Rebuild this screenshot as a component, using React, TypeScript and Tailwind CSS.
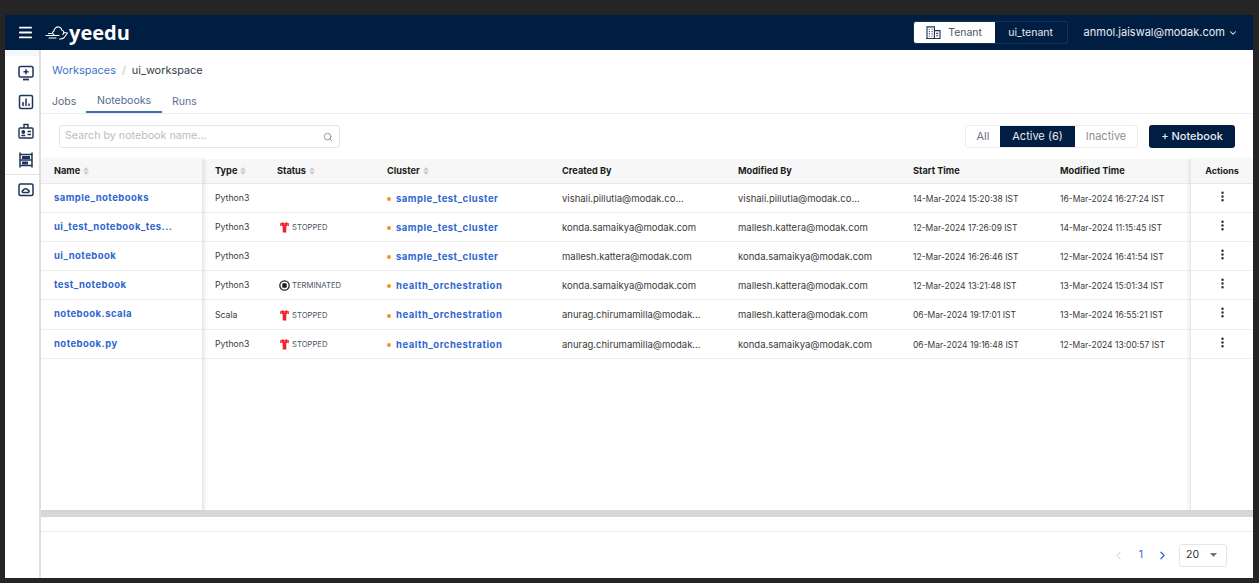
import React from 'react';
import { ChevronDown, ChevronLeft, ChevronRight, EllipsisVertical, Menu, Search } from 'lucide-react';

type Row = {
  name: string;
  type: string;
  status?: 'STOPPED' | 'TERMINATED';
  cluster: string;
  createdBy: string;
  modifiedBy: string;
  start: string;
  modified: string;
  h: string;
};

const rows: Row[] = [
  { name: 'sample_notebooks', type: 'Python3', cluster: 'sample_test_cluster', createdBy: 'vishali.pillutla@modak.co...', modifiedBy: 'vishali.pillutla@modak.co...', start: '14-Mar-2024 15:20:38 IST', modified: '16-Mar-2024 16:27:24 IST', h: 'h-[29px]' },
  { name: 'ui_test_notebook_tes...', type: 'Python3', status: 'STOPPED', cluster: 'sample_test_cluster', createdBy: 'konda.samaikya@modak.com', modifiedBy: 'mallesh.kattera@modak.com', start: '12-Mar-2024 17:26:09 IST', modified: '14-Mar-2024 11:15:45 IST', h: 'h-[29px]' },
  { name: 'ui_notebook', type: 'Python3', cluster: 'sample_test_cluster', createdBy: 'mallesh.kattera@modak.com', modifiedBy: 'konda.samaikya@modak.com', start: '12-Mar-2024 16:26:46 IST', modified: '12-Mar-2024 16:41:54 IST', h: 'h-[29px]' },
  { name: 'test_notebook', type: 'Python3', status: 'TERMINATED', cluster: 'health_orchestration', createdBy: 'konda.samaikya@modak.com', modifiedBy: 'mallesh.kattera@modak.com', start: '12-Mar-2024 13:21:48 IST', modified: '13-Mar-2024 15:01:34 IST', h: 'h-[29px]' },
  { name: 'notebook.scala', type: 'Scala', status: 'STOPPED', cluster: 'health_orchestration', createdBy: 'anurag.chirumamilla@modak...', modifiedBy: 'mallesh.kattera@modak.com', start: '06-Mar-2024 19:17:01 IST', modified: '13-Mar-2024 16:55:21 IST', h: 'h-[30px]' },
  { name: 'notebook.py', type: 'Python3', status: 'STOPPED', cluster: 'health_orchestration', createdBy: 'anurag.chirumamilla@modak...', modifiedBy: 'konda.samaikya@modak.com', start: '06-Mar-2024 19:16:48 IST', modified: '12-Mar-2024 13:00:57 IST', h: 'h-[29px]' },
];

const SortIcon = () => (
  <svg width="6" height="8" viewBox="0 0 6 8" className="ml-[3px] shrink-0">
    <path d="M3 0 6 3.4H0zM3 8 0 4.6h6z" fill="#c9cdd2" />
  </svg>
);

const TeeIcon = () => (
  <svg width="9" height="11" viewBox="0 0 9 11" className="shrink-0">
    <path d="M0 1.400 2.800.3l1.700.9L6.200.3 9 1.400l-.4 2.900-1.500-.5-.8.1v6.700H2.700V3.900l-.8-.1-1.500.5z" fill="#f0212b" />
    <path d="M1.500 1.600v2M7.500 1.600v2M4.500 1.500v1.600" stroke="#ff9a9f" strokeWidth=".6" />
  </svg>
);

const TerminatedIcon = () => (
  <svg width="11" height="11" viewBox="0 0 11 11" className="shrink-0">
    <circle cx="5.500" cy="5.500" r="4.700" fill="none" stroke="#1c1c1c" strokeWidth="1.200" />
    <rect x="3.300" y="3.300" width="4.400" height="4.400" rx=".6" fill="#1c1c1c" />
  </svg>
);

const Logo = () => (
  <svg width="24" height="15" viewBox="0 0 24 15" fill="none" stroke="#fff" strokeWidth="1.100" strokeLinecap="round" strokeLinejoin="round">
    <path d="M9 9.500c-1.800-.2-2-2.800-.2-3.300C9.300 3.300 11.500 1.500 13.800 2c1.700.4 2.800 1.700 3 3.300 1.900.1 2.900 2.800 1 4.200" />
    <path d="M19 7.500 22.500 8 19 12.800c-1.300 1-3 1.300-4.500 1.200" />
    <path d="M3.500 8.500h3M1 10.500h13M4 13h7" />
  </svg>
);

const icon = 'w-[16px] h-[16px]';

const SideIcons = () => (
  <>
    <svg viewBox="0 0 16 16" className={icon} fill="none" stroke="#1d3557" strokeWidth="1.500">
      <rect x="1" y="1.500" width="14" height="10.500" rx="1.500" />
      <path d="M8 4.200v5M5.500 6.700h5" />
      <path d="M5 14.500h6" strokeWidth="1.800" />
    </svg>
    <svg viewBox="0 0 16 16" className={icon} fill="none" stroke="#1d3557" strokeWidth="1.500">
      <rect x="1.500" y="1.500" width="13" height="13" rx="1.500" />
      <path d="M5 8v4M8 4.500V12M11 9.500V12" />
    </svg>
    <svg viewBox="0 0 16 16" className={icon} fill="none" stroke="#1d3557" strokeWidth="1.400">
      <rect x="1" y="5" width="14" height="10" rx="1" />
      <path d="M6 5V1.500h4V5" />
      <circle cx="5.300" cy="9" r="1.200" fill="#1d3557" />
      <path d="M3.300 12.500h4M9.500 8.500H13M9.500 11.500H13" />
    </svg>
    <svg viewBox="0 0 16 16" className={icon} fill="none" stroke="#1d3557" strokeWidth="1.500">
      <path d="M2 .5v15M14 .5v15M2 2.500h12M2 13.500h12M2 8h12" />
      <rect x="4" y="9.500" width="6" height="3" fill="#1d3557" stroke="none" />
      <rect x="4" y="4" width="8" height="3" fill="#1d3557" stroke="none" />
    </svg>
  </>
);

const Th = ({ label, className, sort = true }: { label: string; className: string; sort?: boolean }) => (
  <div className={`flex items-center text-[9.200px] font-bold text-[#1b1b1b] ${className}`}>
    {label}
    {sort && <SortIcon />}
  </div>
);

export default function App() {
  return (
    <div className="h-[583px] w-[1259px] overflow-hidden bg-[#252525] pl-[5px] pr-[6px] pt-[15px] pb-[5px] font-['Inter','Open_Sans',sans-serif]">
      <div className="flex h-full flex-col bg-white">
        <header className="flex h-[35px] shrink-0 items-center bg-[#001d42] text-white">
          <Menu className="ml-[12px] h-[17px] w-[17px]" strokeWidth={2.500} />
          <div className="ml-[11px] flex items-center">
            <Logo />
            <span className="text-[20px] leading-none font-bold font-['Open_Sans',sans-serif]">yeedu</span>
          </div>
          <div className="ml-auto flex h-[23px] items-stretch rounded-[2px] border border-[#14335c] text-[10.500px]">
            <div className="flex w-[81px] items-center justify-center gap-[7px] rounded-l-[2px] bg-white text-[#4b5563]">
              <svg viewBox="0 0 16 14" className="h-[13px] w-[15px]" fill="none" stroke="#1d3557" strokeWidth="1.200">
                <path d="M1 13.500V1h8v12.500M9 5h6v8.500H0" />
                <path d="M3 3.500h1M6 3.500h1M3 6h1M6 6h1M3 8.500h1M6 8.500h1M3 11h1M6 11h1M11 8h2M11 10.500h2" />
              </svg>
              Tenant
            </div>
            <div className="flex w-[72px] items-center justify-center text-[#e5e9f0]">ui_tenant</div>
          </div>
          <div className="ml-[16px] mr-[15px] flex items-center gap-[3px] text-[11px] text-[#e8ecf2]">
            anmol.jaiswal@modak.com
            <ChevronDown className="h-[10px] w-[10px]" strokeWidth={2.500} />
          </div>
        </header>

        <div className="flex min-h-0 flex-1">
          <aside className="flex w-[36px] shrink-0 flex-col border-r-2 border-[#dedede]">
            <div className="h-[6px] shrink-0 bg-[#f4f6fb]" />
            <div className="flex flex-col items-center gap-[13px] pl-[8px] pt-[9px] pb-[6px]">
              <SideIcons />
            </div>
            <div className="h-px w-full bg-[#e3e3e3]" />
            <div className="flex justify-center pl-[8px] pt-[7px]">
              <svg viewBox="0 0 16 16" className={icon} fill="none" stroke="#1d3557" strokeWidth="1.500">
                <rect x="1" y="2" width="14" height="11.500" rx="1.500" />
                <path d="M5 10.500c-1.200-.3-1-2.200.3-2.200.3-1.700 3.500-2.300 4.400-.3 1.500-.2 2.200 2.200.5 2.500z" />
              </svg>
            </div>
          </aside>

          <main className="flex min-w-0 flex-1 flex-col">
            <div className="flex h-[40px] shrink-0 items-center pl-[11px] text-[10.900px]">
              <span className="text-[#3f72c9]">Workspaces</span>
              <span className="mx-[6px] text-[#c4c4c4]">/</span>
              <span className="text-[#333b47]">ui_workspace</span>
            </div>

            <div className="flex h-[24px] shrink-0 items-start border-b border-[#eeeeee] pl-[11px] text-[10.500px]">
              <span className="w-[34px] pt-[4px] text-[#5b6b80]">Jobs</span>
              <span className="h-[23px] w-[76px] border-b-2 border-[#3f6fb5] pt-[3px] text-center text-[#4f6b8f]">Notebooks</span>
              <span className="ml-[10px] pt-[4px] text-[#5b7396]">Runs</span>
            </div>

            <div className="flex h-[45px] shrink-0 items-center pl-[18px] pr-[18px]">
              <div className="flex h-[23px] w-[281px] items-center justify-between rounded-[3px] border border-[#e6e6e6] pl-[5px] pr-[6px] text-[10.700px] text-[#bdbdbd]">
                Search by notebook name...
                <Search className="h-[10px] w-[10px] text-[#7b8794]" />
              </div>
              <div className="ml-auto flex h-[23px] items-stretch rounded-[3px] border border-[#ececec] text-[11px]">
                <div className="flex w-[34px] items-center justify-center text-[#6b7280]">All</div>
                <div className="flex w-[75px] items-center justify-center bg-[#001d42] text-[#e8ecf2]">Active (6)</div>
                <div className="flex w-[62px] items-center justify-center text-[#8b8f96]">Inactive</div>
              </div>
              <button className="ml-[11px] flex h-[23px] w-[86px] items-center justify-center rounded-[3px] bg-[#001d42] text-[11px] font-medium text-[#e8ecf2]">
                + Notebook
              </button>
            </div>

            <div className="flex min-h-0 flex-1">
              <div className="z-10 flex w-[162px] shrink-0 flex-col border-r border-[#e6e6e6] shadow-[2px_0_3px_rgba(0,0,0,0.08)]">
                <div className="flex h-[25px] shrink-0 items-center border-b border-[#e8e8e8] bg-[#f7f7f7] pl-[13px]">
                  <Th label="Name" className="" />
                </div>
                {rows.map((r) => (
                  <div key={r.name} className={`flex ${r.h} shrink-0 items-center border-b border-[#eeeeee] pl-[13px] text-[9.500px] font-bold tracking-[0.45px] text-[#2f66cf]`}>
                    {r.name}
                  </div>
                ))}
              </div>

              <div className="flex min-w-0 flex-1 flex-col">
                <div className="flex h-[25px] shrink-0 items-center border-b border-[#e8e8e8] bg-[#f7f7f7]">
                  <Th label="Type" className="w-[74px] pl-[12px]" />
                  <Th label="Status" className="w-[110px]" />
                  <Th label="Cluster" className="w-[175px]" />
                  <Th label="Created By" className="w-[176px]" sort={false} />
                  <Th label="Modified By" className="w-[175px]" sort={false} />
                  <Th label="Start Time" className="w-[147px]" sort={false} />
                  <Th label="Modified Time" className="flex-1" sort={false} />
                </div>
                {rows.map((r) => (
                  <div key={r.name} className={`flex ${r.h} shrink-0 items-center border-b border-[#eeeeee] pt-[2px] text-[9.500px] text-[#3a3a3a]`}>
                    <div className="w-[74px] pl-[12px] text-[8.700px]">{r.type}</div>
                    <div className="flex w-[110px] items-center text-[7.700px] text-[#4b5563]">
                      {r.status === 'STOPPED' && <span className="w-[15px] pl-[3px]"><TeeIcon /></span>}
                      {r.status === 'TERMINATED' && <span className="w-[15px] pl-[2px]"><TerminatedIcon /></span>}
                      {r.status}
                    </div>
                    <div className="flex w-[175px] items-center gap-[5px] text-[9.500px] font-bold tracking-[0.5px] text-[#2f66cf]">
                      <span className="h-[4px] w-[4px] rounded-full bg-[#f59322]" />
                      {r.cluster}
                    </div>
                    <div className="w-[176px]">{r.createdBy}</div>
                    <div className="w-[175px]">{r.modifiedBy}</div>
                    <div className="w-[147px] text-[8.500px]">{r.start}</div>
                    <div className="flex-1 text-[8.500px]">{r.modified}</div>
                  </div>
                ))}
              </div>

              <div className="z-10 flex w-[63px] shrink-0 flex-col border-l border-[#e6e6e6] shadow-[-2px_0_3px_rgba(0,0,0,0.06)]">
                <div className="flex h-[25px] shrink-0 items-center justify-center border-b border-[#e8e8e8] bg-[#f7f7f7] text-[9px] font-bold text-[#1b1b1b]">
                  Actions
                </div>
                {rows.map((r) => (
                  <div key={r.name} className={`flex ${r.h} shrink-0 items-start justify-center border-b border-[#eeeeee] pt-[6px]`}>
                    <EllipsisVertical className="h-[13px] w-[13px] text-[#1b2a3d]" strokeWidth={2.500} />
                  </div>
                ))}
              </div>
            </div>

            <div className="h-[7px] shrink-0 bg-[#d8d8d8]" />
            <div className="h-[15px] shrink-0 border-b border-[#ececec]" />

            <div className="flex h-[46px] shrink-0 items-center justify-end pr-[26px] text-[10.500px]">
              <ChevronLeft className="h-[13px] w-[13px] text-[#c3c7cd]" strokeWidth={1.800} />
              <span className="ml-[14px] text-[#2f66cf]">1</span>
              <ChevronRight className="ml-[13px] h-[13px] w-[13px] text-[#2f66cf]" strokeWidth={2.200} />
              <div className="ml-[10px] flex h-[23px] w-[48px] items-center justify-between rounded-[3px] border border-[#e6e6e6] pl-[6px] pr-[9px] text-[#333333]">
                20
                <svg width="7" height="4" viewBox="0 0 7 4"><path d="M0 0h7L3.500 4z" fill="#6b7280" /></svg>
              </div>
            </div>
          </main>
        </div>
      </div>
    </div>
  );
}
